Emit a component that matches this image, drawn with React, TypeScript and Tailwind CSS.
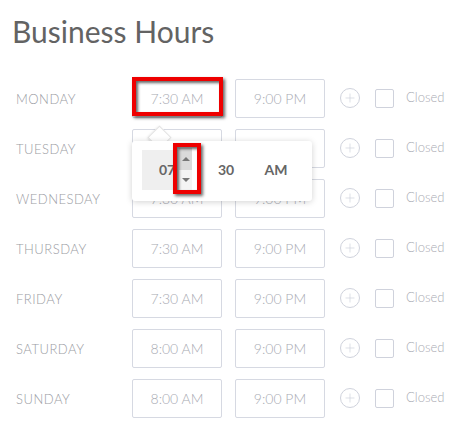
import { Plus } from "lucide-react";

const days = [
  { name: "MONDAY", open: "7:30 AM", close: "9:00 PM" },
  { name: "TUESDAY", open: "7:30 AM", close: "9:00 PM" },
  { name: "WEDNESDAY", open: "7:30 AM", close: "9:00 PM" },
  { name: "THURSDAY", open: "7:30 AM", close: "9:00 PM" },
  { name: "FRIDAY", open: "7:30 AM", close: "9:00 PM" },
  { name: "SATURDAY", open: "8:00 AM", close: "9:00 PM" },
  { name: "SUNDAY", open: "8:00 AM", close: "9:00 PM" },
];

const redMark =
  "absolute border-4 border-[#ee0000] shadow-[2px_2px_3px_rgba(0,0,0,0.6),inset_2px_2px_3px_rgba(0,0,0,0.6)] pointer-events-none";

function TimePopup() {
  return (
    <div className="absolute left-[-1px] top-[61px] z-10">
      {/* caret */}
      <div className="absolute left-[19px] top-[-12px] w-[17px] h-[17px] rotate-45 bg-white border border-[#e4e4e4] shadow-sm" />
      <div className="relative flex w-[180px] h-[60px] bg-white rounded-[3px] shadow-[0_1px_6px_rgba(0,0,0,0.18)] px-[10px] pt-[9px]">
        <div className="relative w-[50px] h-[40px] bg-[#efefef] flex items-center justify-center text-[14px] font-bold text-[#666]">
          07
          <div className="absolute right-0 top-[-2px] w-[13px] h-[42px] flex flex-col">
            <div className="h-[22px] bg-[#dadada] flex items-center justify-center">
              <div className="w-0 h-0 border-l-[4px] border-r-[4px] border-b-[4px] border-l-transparent border-r-transparent border-b-[#777]" />
            </div>
            <div className="flex-1 bg-[#f4f4f4] flex items-center justify-center">
              <div className="w-0 h-0 border-l-[4px] border-r-[4px] border-t-[4px] border-l-transparent border-r-transparent border-t-[#777]" />
            </div>
          </div>
          <div className={`${redMark} left-[31px] top-[-7px] w-[28px] h-[51px]`} />
        </div>
        <div className="ml-[9px] w-[50px] h-[40px] flex items-center justify-center text-[14px] font-bold text-[#666]">
          30
        </div>
        <div className="w-[50px] h-[40px] flex items-center justify-center text-[14px] font-bold text-[#666]">
          AM
        </div>
      </div>
    </div>
  );
}

function TimeBox({ value, children }: { value: string; children?: React.ReactNode }) {
  return (
    <div className="relative w-[90px] h-[39px] border border-[#d6d9e2] rounded-[2px] flex items-center justify-center text-[14px] font-light text-[#a9abb3]">
      {value}
      {children}
    </div>
  );
}

export default function App() {
  return (
    <div className="w-[469px] h-[430px] bg-white font-['Lato',sans-serif] pl-[16px] pt-[13px] overflow-hidden">
      <h1 className="ml-[-4px] text-[30px] leading-[36px] text-[#636363]">Business Hours</h1>
      <div className="mt-[24px] flex flex-col">
        {days.map((d, i) => (
          <div key={d.name} className="h-[50px] flex items-center">
            <div className="w-[116px] pt-[4px] text-[13px] font-light text-[#9a9ca3] tracking-[0.5px]">{d.name}</div>
            <TimeBox value={d.open}>
              {i === 0 && (
                <>
                  <div className={`${redMark} left-[-1px] top-[-3px] w-[91px] h-[39px]`} />
                  <TimePopup />
                </>
              )}
            </TimeBox>
            <div className="ml-[13px]">
              <TimeBox value={d.close} />
            </div>
            <div className="ml-[15px] w-[20px] h-[20px] rounded-full border border-[#cfd2dc] flex items-center justify-center">
              <Plus className="w-[14px] h-[14px] text-[#cfd2dc]" strokeWidth={1.2} />
            </div>
            <div className="ml-[15px] w-[19px] h-[19px] rounded-[2px] border border-[#cfd2dc]" />
            <div className="ml-[12px] text-[13px] font-light text-[#a9abb3]">Closed</div>
          </div>
        ))}
      </div>
    </div>
  );
}
